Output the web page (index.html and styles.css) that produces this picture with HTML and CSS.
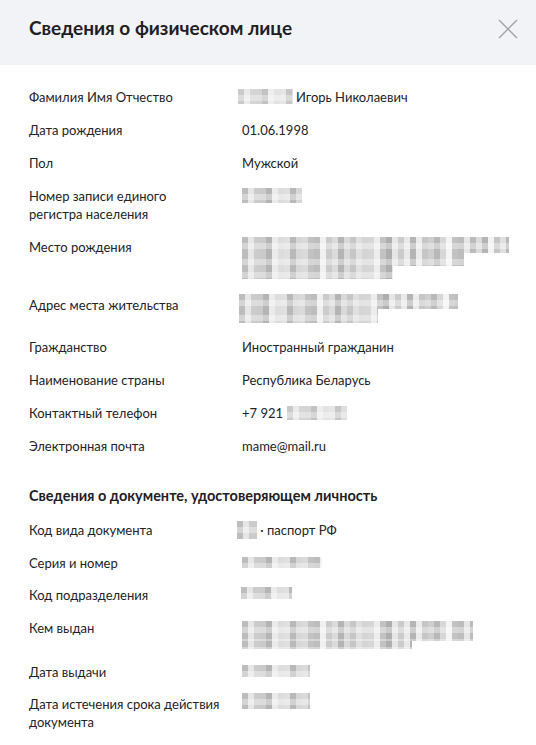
FILE: index.html
```html
<!DOCTYPE html>
<html lang="ru">
<head>
<meta charset="utf-8">
<title>Сведения о физическом лице</title>
<link rel="stylesheet" href="styles.css">
</head>
<body>
<div class="modal">
  <header class="modal-head">
    <h1 class="modal-title">Сведения о физическом лице</h1>
    <button class="close" aria-label="Закрыть">
      <svg width="20" height="20" viewBox="0 0 20 20"><path d="M1 1 L19 19 M19 1 L1 19" stroke="#a3a3a6" stroke-width="1.4" fill="none"/></svg>
    </button>
  </header>
  <div class="modal-body">
    <div class="list">
      <div class="row"><div class="label">Фамилия Имя Отчество</div><div class="value"><span class="blur b-fio"></span>Игорь Николаевич</div></div>
      <div class="row"><div class="label">Дата рождения</div><div class="value">01.06.1998</div></div>
      <div class="row"><div class="label">Пол</div><div class="value">Мужской</div></div>
      <div class="row"><div class="label">Номер записи единого<br>регистра населения</div><div class="value"><span class="blur b-reg"></span></div></div>
      <div class="row row-birth"><div class="label">Место рождения</div><div class="value"><span class="blur bl b-birth1"></span><span class="blur bl b-birth2"></span><span class="blur bl b-birth3"></span></div></div>
      <div class="row row-addr"><div class="label">Адрес места жительства</div><div class="value"><span class="blur bl b-addr1"></span><span class="blur bl b-addr2"></span></div></div>
      <div class="row"><div class="label">Гражданство</div><div class="value">Иностранный гражданин</div></div>
      <div class="row"><div class="label">Наименование страны</div><div class="value">Республика Беларусь</div></div>
      <div class="row"><div class="label">Контактный телефон</div><div class="value">+7 921 <span class="blur b-phone"></span></div></div>
      <div class="row"><div class="label">Электронная почта</div><div class="value">mame@mail.ru</div></div>
    </div>
    <h2 class="section-title">Сведения о документе, удостоверяющем личность</h2>
    <div class="list list-doc">
      <div class="row"><div class="label">Код вида документа</div><div class="value"><span class="blur b-code"></span> · паспорт РФ</div></div>
      <div class="row"><div class="label">Серия и номер</div><div class="value"><span class="blur b-num"></span></div></div>
      <div class="row"><div class="label">Код подразделения</div><div class="value"><span class="blur b-dep"></span></div></div>
      <div class="row row-issuer"><div class="label">Кем выдан</div><div class="value"><span class="blur bl b-iss1"></span><span class="blur bl b-iss2"></span></div></div>
      <div class="row"><div class="label">Дата выдачи</div><div class="value"><span class="blur b-date"></span></div></div>
      <div class="row"><div class="label">Дата истечения срока действия<br>документа</div><div class="value"><span class="blur b-date b-exp"></span></div></div>
    </div>
  </div>
</div>
</body>
</html>
```

FILE: styles.css
```css
* { box-sizing: border-box; }
html, body { margin: 0; padding: 0; background: #fff; }
body {
  font-family: Lato, "Noto Sans", "Open Sans", sans-serif;
  color: #222326;
  width: 536px;
  height: 745px;
  overflow: hidden;
}
.modal-head {
  height: 65px;
  background: #f2f3f6;
  display: flex;
  align-items: center;
  justify-content: space-between;
  padding: 0 18px 0 29px;
}
.modal-title {
  margin: 0;
  font-size: 19px;
  font-weight: 700;
  color: #1f2024;
  line-height: 24px;
  padding-bottom: 9px;
}
.close {
  border: 0;
  background: transparent;
  padding: 0;
  width: 20px;
  height: 20px;
  margin-bottom: 8px;
  display: flex;
}
.modal-body {
  padding: 23px 29px 0 29px;
}
.list {
  display: flex;
  flex-direction: column;
  gap: 15px;
}
.list-doc { gap: 14.7px; }
.row {
  display: grid;
  grid-template-columns: 213px 1fr;
  font-size: 13px;
  line-height: 18px;
}
.label { color: #222326; }
.value { color: #222326; height: 18px; }
.section-title {
  margin: 31px 0 15px;
  font-size: 14.5px;
  font-weight: 700;
  line-height: 20px;
  color: #1f2024;
}

/* pixelated (masked) personal data */
.blur {
  display: inline-block;
  vertical-align: top;
  height: 14px;
  background-color: #d2d2d2;
  background-image:
    repeating-linear-gradient(180deg, rgba(255,255,255,0) 0 6px, rgba(255,255,255,.35) 6px 12px),
    repeating-linear-gradient(90deg,
      rgba(255,255,255,0) 0 18px, rgba(0,0,0,.08) 18px 24px,
      rgba(255,255,255,0) 24px 36px, rgba(255,255,255,.4) 36px 42px),
    repeating-linear-gradient(90deg,
      rgba(0,0,0,.10) 0 6px, rgba(255,255,255,.45) 6px 12px,
      rgba(0,0,0,.03) 12px 18px, rgba(255,255,255,.20) 18px 24px,
      rgba(0,0,0,.14) 24px 30px, rgba(255,255,255,.55) 30px 36px,
      rgba(0,0,0,.06) 36px 42px, rgba(255,255,255,.30) 42px 48px,
      rgba(0,0,0,.12) 48px 54px, rgba(255,255,255,.10) 54px 60px,
      rgba(255,255,255,.60) 60px 66px, rgba(0,0,0,.08) 66px 72px);
}
.bl { display: block; }
.b-fio { width: 55px; height: 15px; margin: 1px 3px 0 -4px; opacity: .8; }
.b-reg { width: 60px; height: 15px; margin-top: 1px; }
.b-birth1 { width: 267px; height: 16px; margin-top: -1px; }
.b-birth2 { width: 222px; height: 13px; }
.b-birth3 { width: 151px; height: 13px; }
.b-addr1 { width: 219px; height: 15px; margin-left: -3px; }
.b-addr2 { width: 139px; height: 14px; margin-left: -3px; }
.b-phone { width: 60px; height: 14px; margin: 2px 0 0 1px; opacity: .8; }
.b-code { width: 20px; height: 18px; margin-left: -5px; }
.b-num { width: 80px; height: 11px; margin-top: 3px; }
.b-dep { width: 51px; height: 12px; margin: 1px 0 0 -1px; }
.b-iss1 { width: 231px; height: 20px; margin-top: 2px; }
.b-iss2 { width: 170px; height: 8px; }
.b-date { width: 68px; height: 12px; margin-top: 2px; }
.b-exp { height: 16px; margin-top: -2px; }
.row-birth .value { height: 43px; }
.row-addr .value { height: 29px; margin-top: -2px; }
.row-issuer .value { height: 29px; }
```
